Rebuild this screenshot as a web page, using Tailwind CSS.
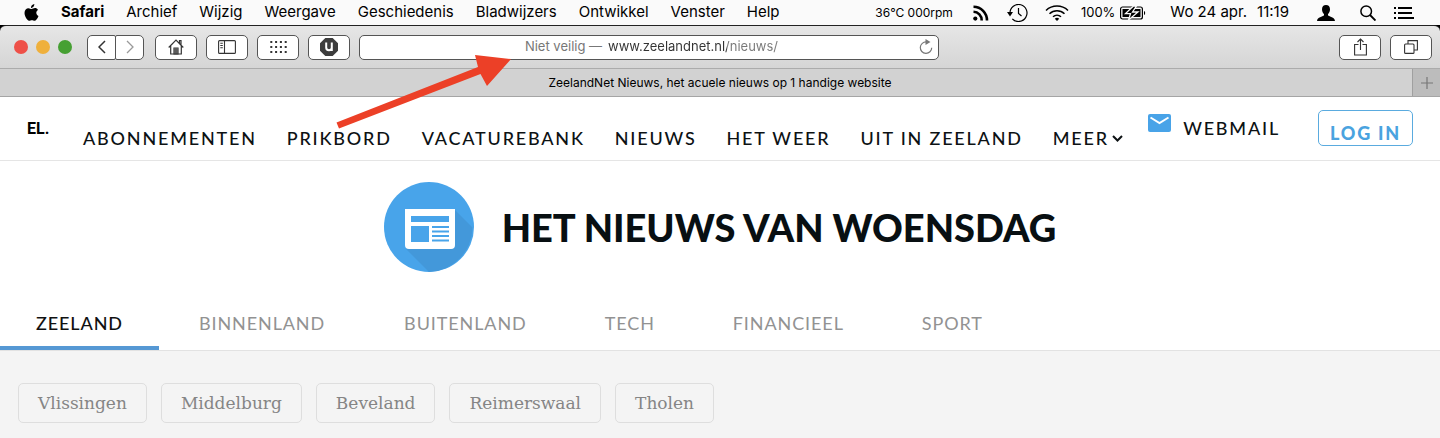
<!DOCTYPE html>
<html lang="nl">
<head>
    <meta charset="UTF-8">
    <meta name="viewport" content="width=device-width, initial-scale=1.0">
    <title>ZeelandNet Nieuws, het acuele nieuws op 1 handige website</title>
    <script src="https://cdn.jsdelivr.net/npm/@tailwindcss/browser@4"></script>
</head>
<body class="relative min-h-screen flex flex-col bg-white font-['Inter',sans-serif] overflow-x-hidden">

    <!-- Menu bar -->
    <header class="flex items-center justify-between h-[25px] pl-6 pr-[26px] bg-[#fafafa] text-black text-[15px] whitespace-nowrap">
        <nav class="flex items-center gap-[22px]">
            <a href="#" aria-label="Apple">
                <svg class="w-[15px] h-[17px]" viewBox="0 0 15 17" fill="currentColor"><path d="M10.3 0c.1 1.1-.3 2-.9 2.800-.6.700-1.500 1.200-2.400 1.100-.1-1 .4-2 .9-2.600C8.500.6 9.500.1 10.300 0zM14 5.900c-1 .6-1.700 1.500-1.700 2.900 0 1.600 1 2.700 2.200 3.100-.5 1.500-1.200 2.700-2 3.700-.6.800-1.200 1.200-2 1.200-.900 0-1.300-.6-2.600-.6s-1.700.6-2.600.6c-.8 0-1.500-.5-2.100-1.300C1.800 13.900.5 11.500.5 9 .5 6 2.400 4.200 4.500 4.200c1.300 0 2.200.8 3.100.8.900 0 1.900-.9 3.400-.9 1.200 0 2.300.6 3 1.800z"/></svg>
            </a>
            <a href="#" class="font-bold">Safari</a>
            <a href="#">Archief</a>
            <a href="#">Wijzig</a>
            <a href="#">Weergave</a>
            <a href="#">Geschiedenis</a>
            <a href="#">Bladwijzers</a>
            <a href="#">Ontwikkel</a>
            <a href="#">Venster</a>
            <a href="#">Help</a>
        </nav>
        <div class="flex items-center">
            <span class="mr-5 text-xs">36°C 000rpm</span>
            <svg class="w-4 h-4 mr-[18px]" viewBox="0 0 16 16" fill="none" stroke="currentColor" stroke-width="2.600"><circle cx="2.300" cy="13.600" r="2.100" fill="currentColor" stroke="none"/><path d="M.5 6.800a8.500 8.500 0 0 1 8.200 8.700M.5 1.800a13.500 13.500 0 0 1 13.500 13.700"/></svg>
            <svg class="w-[21px] h-[18px] mr-[17px]" viewBox="0 0 21 18" fill="none" stroke="currentColor" stroke-width="1.200"><path d="M3 9a8.500 8.500 0 1 1 2.300 5.800M11.500 4v5.500l3 2.500"/><path d="M0 8h6l-3 4.500z" fill="currentColor" stroke="none"/></svg>
            <svg class="w-6 h-4 mr-3" viewBox="0 0 24 16" fill="none" stroke="currentColor" stroke-width="1.500"><path d="M1 5.500a16 16 0 0 1 22 0M4.500 8.700a11 11 0 0 1 15 0M8 11.700a6 6 0 0 1 8 0"/><path d="M12 16l-2.200-2.200a3.200 3.200 0 0 1 4.400 0z" fill="currentColor" stroke="none"/></svg>
            <span class="mr-[5px] text-[13px]">100%</span>
            <svg class="w-[26px] h-[14px] mr-6" viewBox="0 0 26 14"><rect x=".6" y="1" width="21.800" height="12" rx="2" fill="none" stroke="#000" stroke-width="1.200"/><rect x="2.500" y="3" width="18" height="8" fill="#000"/><path d="M24 5v4c1.500-.3 1.500-3.700 0-4z" fill="#000"/><path d="M13.500 0L5.500 7.600h5L8.500 14l9.500-8h-5.500l4-6z" fill="#000" stroke="#fafafa" stroke-width="1.300"/></svg>
            <span class="mr-[10px]">Wo 24 apr.</span>
            <span class="mr-7">11:19</span>
            <svg class="w-[18px] h-4 mr-[25px]" viewBox="0 0 18 16" fill="currentColor"><path d="M9 0c2.500 0 4 1.600 4 4.200 0 2-.8 3.800-2 4.900v1.500c1.500 1 6.500 1.600 7 5.400H0c.5-3.800 5.500-4.400 7-5.400V9.100C5.800 8 5 6.200 5 4.200 5 1.600 6.500 0 9 0z"/></svg>
            <svg class="w-4 h-4 mr-[18px]" viewBox="0 0 16 16" fill="none" stroke="currentColor" stroke-width="1.500"><circle cx="6.200" cy="6.200" r="5.300"/><path d="M10 10l5.500 5.500" stroke-width="1.900"/></svg>
            <svg class="w-5 h-3" viewBox="0 0 20 12" fill="currentColor"><path d="M0 0h2v2H0zM4 0h14v2H4zM0 5h2v2H0zM4 5h14v2H4zM0 10h2v2H0zM4 10h16v2H4z"/></svg>
        </div>
    </header>

    <!-- Safari window -->
    <div class="bg-black">
        <div class="flex items-center h-11 pl-[14px] pr-2 gap-[9px] border-t border-b border-t-[#222] border-b-[#ababab] rounded-t-md bg-linear-to-b from-[#e6e6e6] to-[#d5d5d5] text-[#333]">
            <div class="flex gap-2 mr-[6px]">
                <button aria-label="Sluit" class="size-[14px] rounded-full bg-[#ee5048]"></button>
                <button aria-label="Minimaliseer" class="size-[14px] rounded-full bg-[#efb03c]"></button>
                <button aria-label="Zoom" class="size-[14px] rounded-full bg-[#46a033]"></button>
            </div>
            <div class="flex mr-[2px]">
                <button aria-label="Vorige" class="grid place-items-center w-[29px] h-[25px] bg-white border border-[#555] rounded-l-[5px] rounded-r-xs">
                    <svg class="w-2 h-[14px]" viewBox="0 0 8 14" fill="none" stroke="#333" stroke-width="1.500"><path d="M7 1L1 7l6 6"/></svg>
                </button>
                <button aria-label="Volgende" class="grid place-items-center w-[29px] h-[25px] -ml-px bg-white border border-[#555] rounded-r-[5px] rounded-l-xs">
                    <svg class="w-2 h-[14px]" viewBox="0 0 8 14" fill="none" stroke="#999" stroke-width="1.300"><path d="M1 1l6 6-6 6"/></svg>
                </button>
            </div>
            <button aria-label="Startpagina" class="grid place-items-center w-[42px] h-[25px] bg-white border border-[#555] rounded-[5px]">
                <svg class="w-4 h-4" viewBox="0 0 16 16" fill="none" stroke="currentColor" stroke-width="1.200"><path d="M.7 8.500L8 1.200l7.300 7.300M2.700 7v8h10.600V7M11.500 4V1.500h1.500V6"/><path d="M6 9h4v6H6zM8 9v6M6 11h4M6 13h4"/></svg>
            </button>
            <button aria-label="Navigatiekolom" class="grid place-items-center w-[42px] h-[25px] bg-white border border-[#555] rounded-[5px]">
                <svg class="w-[18px] h-[14px]" viewBox="0 0 18 14" fill="none" stroke="currentColor" stroke-width="1.100"><rect x=".6" y=".6" width="16.800" height="12.800" rx="1"/><path d="M6.500 1v12M2.300 3.300h2.500M2.300 5.500h2.500M2.300 7.700h2.500"/></svg>
            </button>
            <button aria-label="Veelbezochte sites" class="grid place-items-center w-[42px] h-[25px] bg-white border border-[#555] rounded-[5px]">
                <svg class="w-[17px] h-3" viewBox="0 0 17 12" stroke="currentColor" stroke-width="2" stroke-dasharray="2 2.800"><path d="M.3 1H17M.3 6H17M.3 11H17"/></svg>
            </button>
            <button aria-label="uBlock" class="grid place-items-center w-[42px] h-[25px] bg-white border border-[#555] rounded-[5px]">
                <svg class="w-[18px] h-[18px]" viewBox="0 0 18 18"><path d="M5.300 0h7.400L18 5.300v7.400L12.700 18H5.300L0 12.700V5.300z" fill="#3d3d3d"/><path d="M6.200 4.500v5a2.800 2.800 0 0 0 5.600 0V4.500M11.800 4.500V13" fill="none" stroke="#fff" stroke-width="2"/></svg>
            </button>
            <div class="flex-6 flex items-center h-[25px] pr-[5px] bg-white border border-[#555] rounded-[5px] text-[13px] text-[#777]">
                <div class="flex-1 flex justify-center items-center gap-[6px] pl-6">
                    <label for="address">Niet veilig —</label>
                    <input id="address" type="text" value="www.zeelandnet.nl/nieuws/" class="field-sizing-content outline-none text-transparent bg-clip-text bg-linear-to-r from-[#333] from-[70%] to-[#777] to-[70%]">
                </div>
                <button aria-label="Laad opnieuw">
                    <svg class="w-[14px] h-4" viewBox="0 0 14 16" fill="none" stroke="#777" stroke-width="1.200"><path d="M7.500 3A5.700 5.700 0 1 0 12.700 8.700"/><path d="M6.500 0v6l5-3z" fill="#777" stroke="none"/></svg>
                </button>
            </div>
            <div class="flex-4"></div>
            <button aria-label="Deel" class="grid place-items-center w-[42px] h-[25px] bg-white border border-[#555] rounded-[5px]">
                <svg class="w-[13px] h-[18px]" viewBox="0 0 13 18" fill="none" stroke="currentColor" stroke-width="1.100"><path d="M4.500 6.500H.6V17h11.800V6.500H8.500M6.500 12V1M3.500 4l3-3 3 3"/></svg>
            </button>
            <button aria-label="Toon tabbladen" class="grid place-items-center w-[42px] h-[25px] bg-white border border-[#555] rounded-[5px]">
                <svg class="w-[14px] h-[14px]" viewBox="0 0 14 14" fill="none" stroke="currentColor" stroke-width="1.100"><rect x=".6" y="4" width="9.400" height="9.400" rx="1"/><path d="M4 4V.6h9.400V10H10"/></svg>
            </button>
        </div>
    </div>
    <div class="flex h-7 border-b border-[#a5a5a5] bg-[#d2d2d2] text-xs text-black">
        <div class="flex-1 flex items-center justify-center pl-7">ZeelandNet Nieuws, het acuele nieuws op 1 handige website</div>
        <button aria-label="Nieuw tabblad" class="grid place-items-center w-7 bg-[#bcbcbc] border-l border-[#a0a0a0]">
            <svg class="w-3 h-3" viewBox="0 0 12 12" stroke="#777" stroke-width="1.200"><path d="M6 0v12M0 6h12"/></svg>
        </button>
    </div>

    <!-- Site navigation -->
    <div class="flex items-start h-16 pl-[27px] pr-[27px] border-b border-[#e5e5e5] font-['Lato',sans-serif] text-lg text-[#0d1214] whitespace-nowrap">
        <a href="#" class="w-14 pt-5 font-['Roboto',sans-serif] font-bold text-base text-black">EL.</a>
        <nav class="flex gap-[30px] pt-[27px] font-medium tracking-widest">
            <a href="#">ABONNEMENTEN</a>
            <a href="#">PRIKBORD</a>
            <a href="#">VACATUREBANK</a>
            <a href="#">NIEUWS</a>
            <a href="#">HET WEER</a>
            <a href="#">UIT IN ZEELAND</a>
            <a href="#" class="flex items-center gap-[3px]">MEER
                <svg class="w-[11px] h-[7px]" viewBox="0 0 11 7" fill="none" stroke="currentColor" stroke-width="2"><path d="M1 1l4.500 4.500L10 1"/></svg>
            </a>
        </nav>
        <a href="#" class="flex gap-3 ml-auto mr-[38px] pt-[17px] font-medium tracking-widest">
            <svg class="w-[23px] h-[18px]" viewBox="0 0 23 18"><rect width="23" height="18" rx="2" fill="#48a3e8"/><path d="M2.500 3.500l9 5.500 9-5.500" fill="none" stroke="#fff" stroke-width="2"/></svg>
            WEBMAIL
        </a>
        <button class="w-[95px] h-9 mt-[13px] pt-[10px] border border-[#5aabdf] rounded-[5px] font-black leading-6 tracking-widest text-[#4aa3df]">LOG IN</button>
    </div>

    <!-- Heading -->
    <main class="flex-1 flex flex-col font-['Lato',sans-serif]">
        <div class="flex items-center justify-center gap-7 pt-[21px] pb-6">
            <svg class="w-[90px] h-[90px]" viewBox="0 0 90 90">
                <circle cx="45" cy="45" r="45" fill="#48a4ea"/>
                <path d="M71 28l17.500 17.500A45 45 0 0 1 45 90L22 67z" fill="#4398da"/>
                <path d="M21 27h50v36q0 4-4 4H25q-4 0-4-4z" fill="#fff"/>
                <path d="M27 34h38v6H27zM27 44h18v16H27zM48 44h17v2H48zM48 48.500h17v2H48zM48 53h17v2H48zM48 57.500h17v2H48z" fill="#48a4ea"/>
            </svg>
            <h1 class="text-[38px] leading-10 font-black text-[#080f12]">HET NIEUWS VAN WOENSDAG</h1>
        </div>
        <nav class="flex border-b border-[#e2e2e2] text-lg text-[#929292] tracking-wider">
            <a href="#" class="pt-[13px] pb-[9px] px-9 border-b-4 border-[#5598d4] font-medium text-[#111]">ZEELAND</a>
            <a href="#" class="pt-[13px] px-10">BINNENLAND</a>
            <a href="#" class="pt-[13px] px-[39px]">BUITENLAND</a>
            <a href="#" class="pt-[13px] px-[39px]">TECH</a>
            <a href="#" class="pt-[13px] px-[39px]">FINANCIEEL</a>
            <a href="#" class="pt-[13px] px-[39px]">SPORT</a>
        </nav>
        <div class="flex-1 flex items-start gap-[14px] px-[18px] pt-8 bg-[#f4f4f4] font-['DejaVu_Serif',serif] text-[17px] leading-6 text-[#858585]">
            <a href="#" class="px-[19px] py-[7px] border border-[#dedede] rounded-[5px]">Vlissingen</a>
            <a href="#" class="px-[19px] py-[7px] border border-[#dedede] rounded-[5px]">Middelburg</a>
            <a href="#" class="px-[19px] py-[7px] border border-[#dedede] rounded-[5px]">Beveland</a>
            <a href="#" class="px-[19px] py-[7px] border border-[#dedede] rounded-[5px]">Reimerswaal</a>
            <a href="#" class="px-[19px] py-[7px] border border-[#dedede] rounded-[5px]">Tholen</a>
        </div>
    </main>

    <!-- Arrow pointing at the address bar -->
    <svg class="absolute left-[336px] top-[54px] w-[176px] h-[76px] pointer-events-none" viewBox="0 0 176 76" fill="#ec4027"><path d="M.5 68.500L142 13l-3-12 36 4-24 27-6.500-12L3 74.500z"/></svg>
</body>
</html>
